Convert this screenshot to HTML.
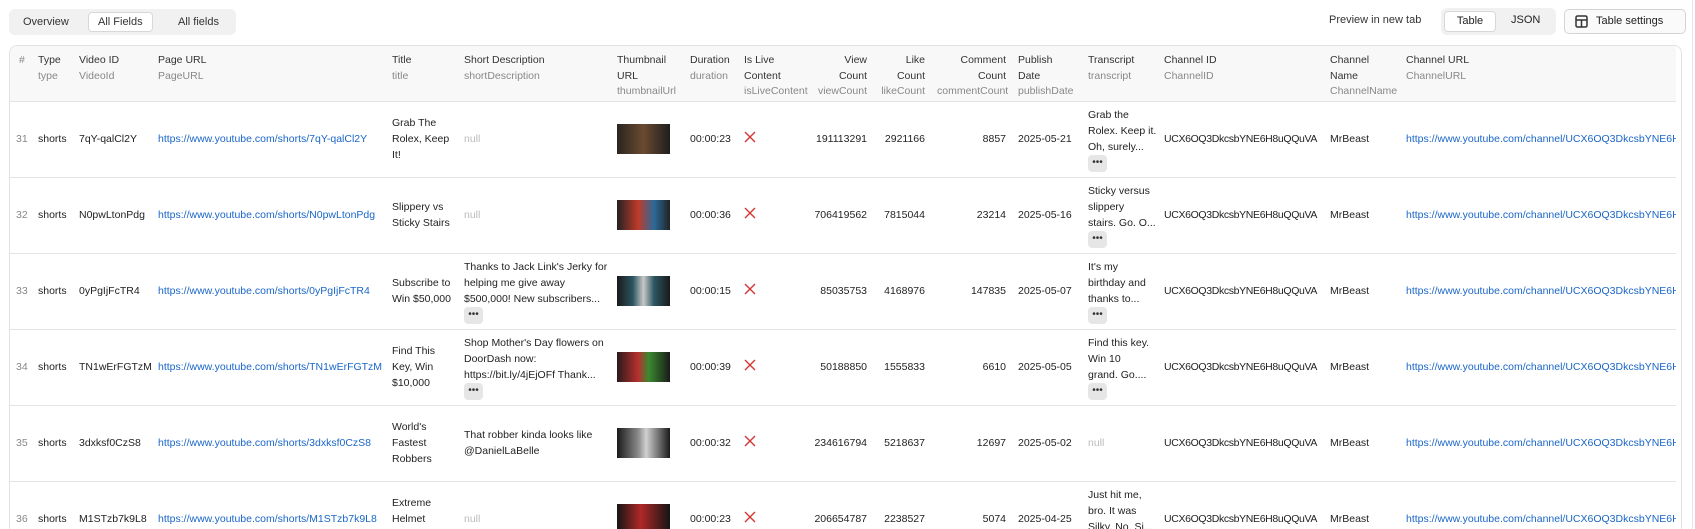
<!DOCTYPE html>
<html style="height:529px;overflow:hidden"><head><meta charset="utf-8"><style>
*{box-sizing:border-box;margin:0;padding:0}
body{width:1695px;height:529px;overflow:hidden;position:relative;background:#fff;font-family:"Liberation Sans",sans-serif;font-size:10.5px;color:#222}
.tabs{position:absolute;left:9px;top:9px;height:26px;width:227px;background:#f1f1f1;border-radius:6px}
.tabs span{position:absolute;top:4px;height:18px;line-height:18px;font-size:11px;color:#333}
.tabs .act{background:#fff;border:1px solid #d8d8d8;border-radius:4px;padding:0 9px;top:3px;height:20px;line-height:18px}
.right{position:absolute;top:9px;font-size:11px;color:#333}
.seg{position:absolute;left:1441px;top:8px;width:115px;height:27px;background:#f1f1f1;border-radius:6px;font-size:11px}
.seg .act{position:absolute;left:3px;top:3px;width:52px;height:21px;background:#fff;border:1px solid #d8d8d8;border-radius:4px;text-align:center;line-height:19px}
.ts{position:absolute;left:1564px;top:9px;width:122px;height:25px;border:1px solid #d4d4d4;border-radius:5px;background:#fafafa;line-height:23px;padding-left:31px;font-size:11px}
.wrap{position:absolute;left:9px;top:45px;width:1673px;height:484px;border:1px solid #e2e2e2;border-bottom:none;border-radius:8px 8px 0 0;overflow:hidden}
table{border-collapse:collapse;table-layout:fixed;width:1666px}
th{background:#f8f8f8;font-weight:normal;text-align:left;vertical-align:top;padding:7px 6px 0;height:55px;line-height:15.5px;color:#333;border-bottom:1px solid #e4e4e4;white-space:nowrap}
th small{display:block;color:#888;font-size:10.5px}
td{height:76px;padding:0 6px;vertical-align:middle;line-height:16px;border-bottom:1px solid #e4e4e4;white-space:nowrap;overflow:hidden}
tr{height:76px}
.n{color:#888}
.r{text-align:right}
a{color:#1a66c9;text-decoration:none;white-space:nowrap}
.null{color:#bbb}
.th{display:block;width:53px;height:30px;background:#2a2220}
.dots{display:inline-block;width:19px;height:17px;background:#e6e6e6;border-radius:4px;text-align:center;line-height:16px;font-size:10px;color:#333;vertical-align:top}
.cid{letter-spacing:-0.35px}
</style></head><body>
<div class="tabs"><span style="left:14px">Overview</span><span class="act" style="left:79px">All Fields</span><span style="left:169px">All fields</span></div>
<div class="right" style="left:1329px;top:14px">Preview in new tab</div>
<div class="seg"><div class="act">Table</div><span style="position:absolute;left:70px;top:6px">JSON</span></div>
<div class="ts"><svg style="position:absolute;left:10px;top:5px" width="13" height="13" viewBox="0 0 13 13"><rect x="1" y="1" width="11" height="11" rx="1.5" fill="none" stroke="#333" stroke-width="1.5"/><path d="M1 5h11M6.5 5v7" stroke="#333" stroke-width="1.5"/></svg>Table settings</div>
<div class="wrap"><table>
<colgroup><col style="width:22px"><col style="width:41px"><col style="width:79px"><col style="width:234px"><col style="width:72px"><col style="width:153px"><col style="width:73px"><col style="width:54px"><col style="width:63px"><col style="width:72px"><col style="width:58px"><col style="width:81px"><col style="width:70px"><col style="width:76px"><col style="width:166px"><col style="width:76px"><col style="width:276px"></colgroup>
<tr style="height:55px"><th class="n" style="padding-left:9px">#</th><th>Type<small>type</small></th><th>Video ID<small>VideoId</small></th><th>Page URL<small>PageURL</small></th><th>Title<small>title</small></th><th>Short Description<small>shortDescription</small></th><th>Thumbnail<br>URL<small>thumbnailUrl</small></th><th>Duration<small>duration</small></th><th>Is Live<br>Content<small>isLiveContent</small></th><th class="r">View<br>Count<small>viewCount</small></th><th class="r">Like<br>Count<small>likeCount</small></th><th class="r">Comment<br>Count<small>commentCount</small></th><th>Publish<br>Date<small>publishDate</small></th><th>Transcript<small>transcript</small></th><th>Channel ID<small>ChannelID</small></th><th>Channel<br>Name<small>ChannelName</small></th><th>Channel URL<small>ChannelURL</small></th></tr>
<tr><td class="n">31</td><td>shorts</td><td>7qY-qalCl2Y</td><td><a>https://www.youtube.com/shorts/7qY-qalCl2Y</a></td><td>Grab The<br>Rolex, Keep<br>It!</td><td class="null">null</td><td><span class="th" style="background:linear-gradient(90deg,#2a2520,#6a4a30 50%,#1e1e1e)"></span></td><td>00:00:23</td><td><svg width="12" height="12"><path d="M1 1L11 11M11 1L1 11" stroke="#d63333" stroke-width="1.4"/></svg></td><td class="r">191113291</td><td class="r">2921166</td><td class="r">8857</td><td>2025-05-21</td><td>Grab the<br>Rolex. Keep it.<br>Oh, surely...<br><span class="dots">•••</span></td><td class="cid">UCX6OQ3DkcsbYNE6H8uQQuVA</td><td>MrBeast</td><td><a>https://www.youtube.com/channel/UCX6OQ3DkcsbYNE6H8uQQuVA</a></td></tr>
<tr><td class="n">32</td><td>shorts</td><td>N0pwLtonPdg</td><td><a>https://www.youtube.com/shorts/N0pwLtonPdg</a></td><td>Slippery vs<br>Sticky Stairs</td><td class="null">null</td><td><span class="th" style="background:linear-gradient(90deg,#222,#c03a2a 40%,#2a6a9a 70%,#222)"></span></td><td>00:00:36</td><td><svg width="12" height="12"><path d="M1 1L11 11M11 1L1 11" stroke="#d63333" stroke-width="1.4"/></svg></td><td class="r">706419562</td><td class="r">7815044</td><td class="r">23214</td><td>2025-05-16</td><td>Sticky versus<br>slippery<br>stairs. Go. O...<br><span class="dots">•••</span></td><td class="cid">UCX6OQ3DkcsbYNE6H8uQQuVA</td><td>MrBeast</td><td><a>https://www.youtube.com/channel/UCX6OQ3DkcsbYNE6H8uQQuVA</a></td></tr>
<tr><td class="n">33</td><td>shorts</td><td>0yPgIjFcTR4</td><td><a>https://www.youtube.com/shorts/0yPgIjFcTR4</a></td><td>Subscribe to<br>Win $50,000</td><td>Thanks to Jack Link's Jerky for<br>helping me give away<br>$500,000! New subscribers...<br><span class="dots">•••</span></td><td><span class="th" style="background:linear-gradient(90deg,#1a1a1a,#2c5560 30%,#c8c8c8 50%,#2c5560 70%,#1a1a1a)"></span></td><td>00:00:15</td><td><svg width="12" height="12"><path d="M1 1L11 11M11 1L1 11" stroke="#d63333" stroke-width="1.4"/></svg></td><td class="r">85035753</td><td class="r">4168976</td><td class="r">147835</td><td>2025-05-07</td><td>It's my<br>birthday and<br>thanks to...<br><span class="dots">•••</span></td><td class="cid">UCX6OQ3DkcsbYNE6H8uQQuVA</td><td>MrBeast</td><td><a>https://www.youtube.com/channel/UCX6OQ3DkcsbYNE6H8uQQuVA</a></td></tr>
<tr><td class="n">34</td><td>shorts</td><td>TN1wErFGTzM</td><td><a>https://www.youtube.com/shorts/TN1wErFGTzM</a></td><td>Find This<br>Key, Win<br>$10,000</td><td>Shop Mother's Day flowers on<br>DoorDash now:<br>https://bit.ly/4jEjOFf Thank...<br><span class="dots">•••</span></td><td><span class="th" style="background:linear-gradient(90deg,#2a1a1a,#b83030 40%,#3a8a30 60%,#1a1a1a)"></span></td><td>00:00:39</td><td><svg width="12" height="12"><path d="M1 1L11 11M11 1L1 11" stroke="#d63333" stroke-width="1.4"/></svg></td><td class="r">50188850</td><td class="r">1555833</td><td class="r">6610</td><td>2025-05-05</td><td>Find this key.<br>Win 10<br>grand. Go....<br><span class="dots">•••</span></td><td class="cid">UCX6OQ3DkcsbYNE6H8uQQuVA</td><td>MrBeast</td><td><a>https://www.youtube.com/channel/UCX6OQ3DkcsbYNE6H8uQQuVA</a></td></tr>
<tr><td class="n">35</td><td>shorts</td><td>3dxksf0CzS8</td><td><a>https://www.youtube.com/shorts/3dxksf0CzS8</a></td><td>World's<br>Fastest<br>Robbers</td><td>That robber kinda looks like<br>@DanielLaBelle</td><td><span class="th" style="background:linear-gradient(90deg,#1a1a1a,#8a8a8a 40%,#d0d0d0 55%,#1a1a1a)"></span></td><td>00:00:32</td><td><svg width="12" height="12"><path d="M1 1L11 11M11 1L1 11" stroke="#d63333" stroke-width="1.4"/></svg></td><td class="r">234616794</td><td class="r">5218637</td><td class="r">12697</td><td>2025-05-02</td><td class="null">null</td><td class="cid">UCX6OQ3DkcsbYNE6H8uQQuVA</td><td>MrBeast</td><td><a>https://www.youtube.com/channel/UCX6OQ3DkcsbYNE6H8uQQuVA</a></td></tr>
<tr><td class="n">36</td><td>shorts</td><td>M1STzb7k9L8</td><td><a>https://www.youtube.com/shorts/M1STzb7k9L8</a></td><td>Extreme<br>Helmet<br>Game</td><td class="null">null</td><td><span class="th" style="background:linear-gradient(90deg,#151515,#b02828 45%,#151515)"></span></td><td>00:00:23</td><td><svg width="12" height="12"><path d="M1 1L11 11M11 1L1 11" stroke="#d63333" stroke-width="1.4"/></svg></td><td class="r">206654787</td><td class="r">2238527</td><td class="r">5074</td><td>2025-04-25</td><td>Just hit me,<br>bro. It was<br>Silky. No. Si...<br><span class="dots">•••</span></td><td class="cid">UCX6OQ3DkcsbYNE6H8uQQuVA</td><td>MrBeast</td><td><a>https://www.youtube.com/channel/UCX6OQ3DkcsbYNE6H8uQQuVA</a></td></tr>
</table></div>
<div style="position:absolute;left:1692px;top:0;width:1px;height:529px;background:#e6e6e6"></div>
</body></html>
